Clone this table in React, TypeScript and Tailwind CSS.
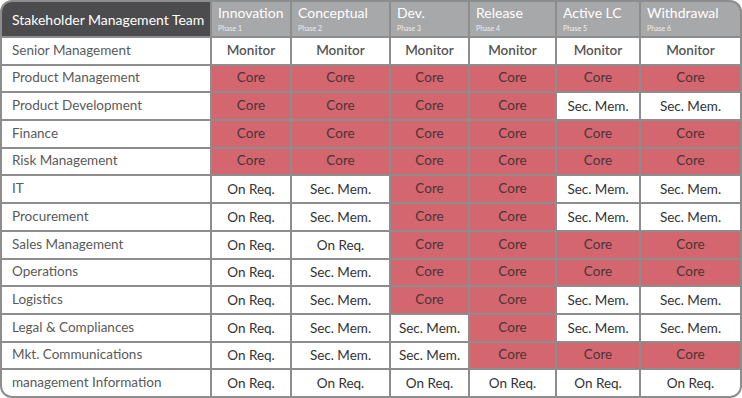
import React from "react";

const phases = [
  { name: "Innovation", phase: "Phase 1" },
  { name: "Conceptual", phase: "Phase 2" },
  { name: "Dev.", phase: "Phase 3" },
  { name: "Release", phase: "Phase 4" },
  { name: "Active LC", phase: "Phase 5" },
  { name: "Withdrawal", phase: "Phase 6" },
];

const C = "Core";
const S = "Sec. Mem.";
const O = "On Req.";
const M = "Monitor";

const rows: [string, string[]][] = [
  ["Senior Management", [M, M, M, M, M, M]],
  ["Product Management", [C, C, C, C, C, C]],
  ["Product Development", [C, C, C, C, S, S]],
  ["Finance", [C, C, C, C, C, C]],
  ["Risk Management", [C, C, C, C, C, C]],
  ["IT", [O, S, C, C, S, S]],
  ["Procurement", [O, S, C, C, S, S]],
  ["Sales Management", [O, O, C, C, C, C]],
  ["Operations", [O, S, C, C, C, C]],
  ["Logistics", [O, S, C, C, S, S]],
  ["Legal & Compliances", [O, S, S, C, S, S]],
  ["Mkt. Communications", [O, S, S, C, C, C]],
  ["management Information", [O, O, O, O, O, O]],
];

function Cell({ value }: { value: string }) {
  if (value === C) {
    return (
      <div className="flex items-center justify-center bg-[#d4666f] pb-[2px] text-[13.5px] text-[#4a3436]">
        Core
      </div>
    );
  }
  if (value === M) {
    return (
      <div className="flex items-center justify-center bg-white pb-[2px] text-[13.5px] font-semibold text-[#555]">
        Monitor
      </div>
    );
  }
  return (
    <div className="flex items-center justify-center bg-white text-[13.5px] text-[#333]">
      {value}
    </div>
  );
}

export default function App() {
  return (
    <div
      className="h-[398px] w-[742px] overflow-hidden rounded-[12px] border-2 border-[#8d8d8d] bg-[#8d8d8d]"
      style={{ fontFamily: "Lato, 'Open Sans', sans-serif" }}
    >
      <div className="grid h-full grid-cols-[208px_78px_97px_77px_85px_82px_1fr] grid-rows-[34px_repeat(13,1fr)] gap-[2px]">
        <div className="flex items-center bg-[#4c4c4e] pl-[10px] text-[14px] text-white">
          Stakeholder Management Team
        </div>
        {phases.map((p) => (
          <div key={p.name} className="flex flex-col bg-[#a7a8aa] pl-[6px] pt-[1px] text-white">
            <span className="text-[14px] leading-[20px]">{p.name}</span>
            <span className="text-[7px] leading-[10px] text-[#eeeeee]">{p.phase}</span>
          </div>
        ))}
        {rows.map(([label, values]) => (
          <React.Fragment key={label}>
            <div className="flex items-center bg-white pb-[2px] pl-[10px] text-[13.5px] text-[#5a5a5a]">{label}</div>
            {values.map((v, i) => (
              <Cell key={i} value={v} />
            ))}
          </React.Fragment>
        ))}
      </div>
    </div>
  );
}
